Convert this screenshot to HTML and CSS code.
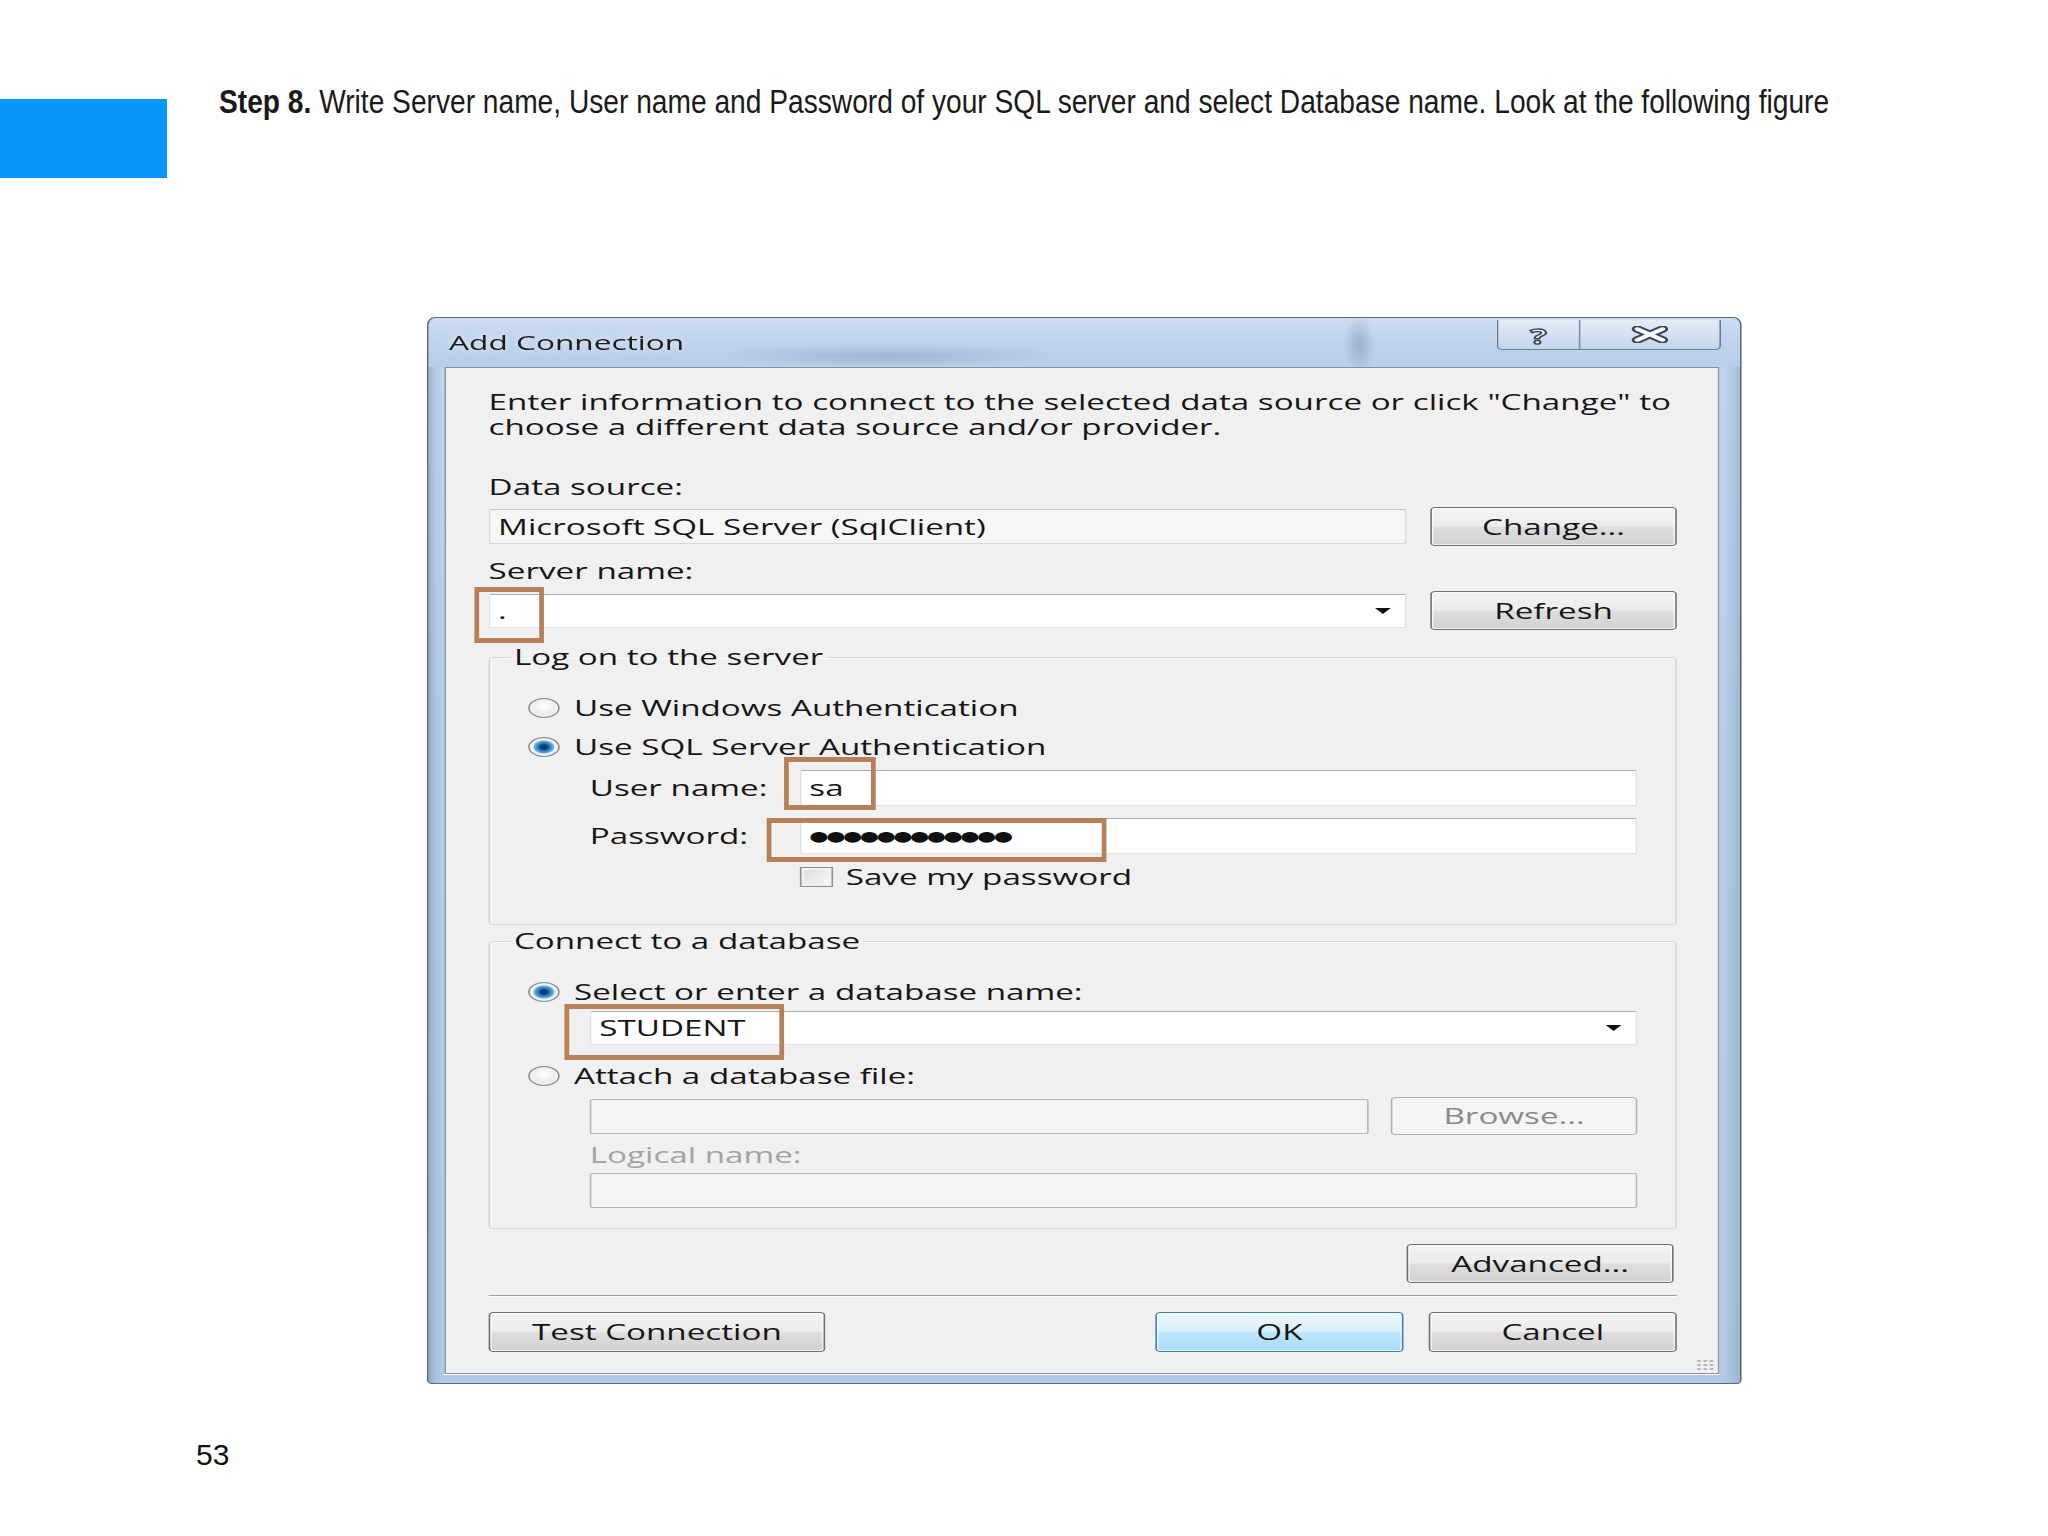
FILE: index.html
```html
<!DOCTYPE html>
<html lang="en">
<head>
  <meta charset="UTF-8" />
  <title>Step 8 — Add Connection</title>
  <link rel="stylesheet" href="styles.css">
</head>
<body>

<div class="slide">
  <div class="head">
    <div class="tab-mark"></div>
    <p class="step"><b>Step 8.</b> Write Server name, User name and Password of your SQL server and select Database name. Look at the following figure</p>
  </div>

  <!-- Screenshot: Add Connection dialog -->
  <div class="dialog">
    <div class="titlebar">
      <span class="title">Add Connection</span>
      <div class="caption-btns">
        <span class="cap help">?</span>
        <span class="cap close">
          <svg width="24" height="17" viewBox="0 0 24 17" preserveAspectRatio="none">
            <path d="M4 3 L20 14 M20 3 L4 14" stroke="#3b4756" stroke-width="7" stroke-linecap="round" fill="none"/>
            <path d="M4 3 L20 14 M20 3 L4 14" stroke="#f6f8fb" stroke-width="3.4" stroke-linecap="round" fill="none"/>
          </svg>
        </span>
      </div>
    </div>

    <div class="panel">
      <p class="intro">Enter information to connect to the selected data source or click "Change" to<br>choose a different data source and/or provider.</p>

      <div class="label">Data source:</div>
      <div class="row">
        <div class="field readonly">Microsoft SQL Server (SqlClient)</div>
        <button class="btn">Change...</button>
      </div>

      <div class="label">Server name:</div>
      <div class="row">
        <div class="field combo">.<span class="arrow"></span></div>
        <button class="btn">Refresh</button>
      </div>

      <fieldset class="group logon">
        <legend>Log on to the server</legend>
        <div class="opt"><span class="radio"></span>Use Windows Authentication</div>
        <div class="opt second"><span class="radio on"></span>Use SQL Server Authentication</div>
        <div class="cred user"><span class="cred-label">User name:</span><div class="field">sa</div></div>
        <div class="cred pass"><span class="cred-label">Password:</span><div class="field"><span class="dots">●●●●●●●●●●●●</span></div></div>
        <div class="check"><span class="box"></span>Save my password</div>
      </fieldset>

      <fieldset class="group database">
        <legend>Connect to a database</legend>
        <div class="opt"><span class="radio on"></span>Select or enter a database name:</div>
        <div class="field combo indent db-name">STUDENT<span class="arrow"></span></div>
        <div class="opt attach"><span class="radio"></span>Attach a database file:</div>
        <div class="row indent attach-row">
          <div class="field disabled"></div>
          <button class="btn disabled">Browse...</button>
        </div>
        <div class="label muted indent logical">Logical name:</div>
        <div class="field disabled indent logical-field"></div>
      </fieldset>

      <div class="advanced"><button class="btn">Advanced...</button></div>
      <div class="sep"></div>
      <div class="actions">
        <button class="btn test">Test Connection</button>
        <button class="btn default">OK</button>
        <button class="btn">Cancel</button>
      </div>
      <div class="grip"></div>
    </div>

    <!-- highlight frames drawn over the screenshot -->
    <div class="mark m-server"></div>
    <div class="mark m-user"></div>
    <div class="mark m-pass"></div>
    <div class="mark m-db"></div>
  </div>

  <div class="page-no">53</div>
</div>

</body>
</html>
```

FILE: styles.css
```css
* { box-sizing: border-box; margin: 0; padding: 0; }

body {
  background: #ffffff;
  font-family: 'Liberation Sans', Arial, sans-serif;
  color: #1a1a1a;
}

/* Slide header */
.head {
  display: flex;
  align-items: flex-start;
  height: 178px;
}

.tab-mark {
  width: 167px;
  height: 79px;
  margin-top: 99px;
  background: #0a97fa;
  flex-shrink: 0;
}

/* no narrow face installed: squeeze the regular one */
.step {
  margin: 81px 0 0 52px;
  font-family: 'Liberation Sans', Arial, sans-serif;
  font-size: 34px;
  line-height: 40px;
  color: #1a1a1a;
  white-space: nowrap;
  transform: scaleX(0.828);
  transform-origin: 0 0;
}

.step b { font-weight: 700; }

.page-no {
  margin: 53px 0 0 196px;
  font-size: 30px;
  line-height: 36px;
  color: #111;
}

/* The dialog is a stretched screenshot: built at its own size, widened */
.dialog {
  position: relative;
  width: 832px;
  margin: 139px 0 0 427px;
  padding-bottom: 9px;
  transform: scaleX(1.58);
  transform-origin: 0 0;
  font-family: 'Open Sans', 'Noto Sans', sans-serif;
  font-size: 21px;
  color: #161616;
  border: 1px solid #5d6978;
  border-radius: 5px 5px 3px 3px / 8px 8px 4px 4px;
  background:
    linear-gradient(90deg, rgba(70,95,130,0.3) 0, rgba(70,95,130,0.1) 4px, rgba(70,95,130,0) 9px),
    linear-gradient(270deg, rgba(90,115,150,0.25) 0, rgba(90,115,150,0) 10px),
    linear-gradient(#c3d6ee, #b7cde8 40%, #b3cae6);
}

.titlebar {
  height: 49px;
  display: flex;
  align-items: center;
  padding-left: 13px;
  background:
    radial-gradient(ellipse 110px 12px at 290px 38px, rgba(95,120,160,0.3), rgba(95,120,160,0)),
    radial-gradient(ellipse 10px 30px at 589px 26px, rgba(90,115,150,0.35), rgba(90,115,150,0)),
    linear-gradient(#cddcf0, #bcd1eb 60%, #b9cfe9);
  border-radius: 5px 5px 0 0 / 8px 8px 0 0;
}

.title {
  font-size: 20px;
  color: #1c1c1c;
  text-shadow: 0 0 6px rgba(255,255,255,0.8);
}

.caption-btns {
  display: flex;
  align-self: flex-start;
  margin: 2px 12px 0 auto;
  height: 30px;
  border: 1px solid #6e7b8c;
  border-top: none;
  border-radius: 0 0 4px 4px;
  background: linear-gradient(rgba(255,255,255,0.45), rgba(210,224,240,0.3));
}

.cap {
  display: flex;
  align-items: center;
  justify-content: center;
}

.cap.help {
  width: 52px;
  border-right: 1px solid #8290a2;
  font-weight: 700;
  font-size: 22px;
  line-height: 26px;
  color: #f8f9fb;
  -webkit-text-stroke: 1.4px #3b4756;
}

.cap.close { width: 88px; }

/* Client area */
.panel {
  position: relative;
  margin: 0 13px 0 10px;
  padding: 22px 26px 21px 27px;
  background: #f0f0f0;
  border: 1px solid #8593a5;
}

.intro { line-height: 25px; }

.label {
  margin-top: 35px;
  line-height: 25px;
}

.label + .row { margin-top: 7px; }
.row + .label { margin-top: 13px; }

.row {
  display: flex;
  align-items: center;
  gap: 15px;
  height: 39px;
}

.field {
  flex: 1;
  height: 35px;
  display: flex;
  align-items: center;
  padding: 0 5px;
  background: #ffffff;
  border: 1px solid #dfe3e9;
  border-top-color: #a9acb2;
  border-radius: 2px;
  white-space: nowrap;
}

.field.readonly {
  background: #f6f6f6;
  border-color: #d8d8d8;
  border-top-color: #c2c2c2;
}

.field.disabled {
  background: #f4f4f4;
  border-color: #b4b6b9;
}

.combo { height: 34px; }

.arrow {
  margin: 0 4px 0 auto;
  border-left: 5.5px solid transparent;
  border-right: 5.5px solid transparent;
  border-top: 6px solid #111;
}

.btn {
  width: 156px;
  height: 39px;
  flex-shrink: 0;
  font-family: 'Open Sans', 'Noto Sans', sans-serif;
  font-size: 21px;
  color: #161616;
  border: 1px solid #707070;
  border-radius: 3px;
  background: linear-gradient(#f3f3f3, #ececec 48%, #dedede 52%, #d1d1d1);
  box-shadow: inset 0 0 0 1px rgba(255,255,255,0.7);
  cursor: pointer;
}

.btn.disabled {
  color: #8a8a8a;
  border-color: #adb2b5;
  background: #f4f4f4;
  box-shadow: none;
}

.btn.default {
  border-color: #3c7fb1;
  background: linear-gradient(#eaf6fd, #d9f0fc 48%, #bee6fd 52%, #a9daf5);
}

/* Group boxes */
.group {
  margin-top: 15px;
  min-width: 0;
  padding: 23px 24px 35px 24px;
  border: 1px solid #d3d6d9;
  border-radius: 3px;
  box-shadow: inset 1px 1px 0 #fbfbfb;
}

.group legend {
  margin-left: -11px;
  padding: 0 2px;
  line-height: 25px;
}

.group.database {
  margin-top: 4px;
  padding-bottom: 20px;
}

.opt {
  display: flex;
  align-items: center;
  height: 30px;
}

.opt.second { margin-top: 9px; }
.opt.attach { margin-top: 16px; }

.radio {
  width: 20px;
  height: 20px;
  margin-right: 9px;
  border-radius: 50%;
  border: 1px solid #8b8c8d;
  background: radial-gradient(circle at 50% 40%, #ffffff, #dadada);
  box-shadow: inset 0 0 0 2px #f3f3f3;
}

.radio.on {
  background: radial-gradient(circle, #0f3d6b 0, #0f3d6b 2px, #2b81c6 4px, #64aee3 6px, #e9eef3 7px, #d6d6d6 10px);
}

.cred {
  display: flex;
  align-items: center;
  height: 36px;
  margin-top: 8px;
  padding-left: 39px;
}

.cred.pass { margin-top: 12px; }

.cred-label {
  width: 133px;
  flex-shrink: 0;
}

.cred .field { height: 36px; }

.dots {
  font-family: 'DejaVu Sans', sans-serif;
  font-size: 14px;
  letter-spacing: -1.6px;
  color: #111;
}

.check {
  display: flex;
  align-items: center;
  height: 24px;
  margin-top: 11px;
  padding-left: 172px;
}

.box {
  width: 21px;
  height: 20px;
  margin-right: 8px;
  border: 1px solid #8e8f8f;
  background: linear-gradient(135deg, #d9d9d9, #fbfbfb);
  box-shadow: inset 0 0 0 2px #efefef;
}

.indent { margin-left: 39px; }

.db-name { margin-top: 4px; }

.attach-row {
  margin-top: 6px;
  height: 38px;
  gap: 14px;
}

.attach-row .btn { height: 38px; }

.label.logical {
  margin-top: 8px;
}

.muted { color: #a3a3a3; }

.logical-field { margin-top: 5px; }

.advanced {
  display: flex;
  justify-content: flex-end;
  margin-top: 15px;
  padding-right: 2px;
}

.advanced .btn { width: 169px; }

.sep {
  margin-top: 12px;
  border-top: 1px solid #a0a0a0;
  border-bottom: 1px solid #ffffff;
}

.actions {
  display: flex;
  gap: 16px;
  margin-top: 15px;
}

.actions .btn { height: 40px; width: 157px; }
.actions .btn.test { width: 213px; }
.actions .btn.default { margin-left: auto; }

.grip {
  position: absolute;
  right: 2px;
  bottom: 2px;
  width: 12px;
  height: 12px;
  background: radial-gradient(circle, #b5b5b5 1px, transparent 1.5px) 0 0 / 4px 4px;
}

/* Orange annotation frames over the screenshot */
.mark {
  position: absolute;
  border: 5px solid #b5805a;
  border-left-width: 3.2px;
  border-right-width: 3.2px;
}

.m-server { left: 28.7px; top: 269px; width: 44px; height: 56px; }
.m-user   { left: 225px;  top: 439px; width: 57.5px; height: 53px; }
.m-pass   { left: 214px;  top: 500px; width: 215px; height: 44px; }
.m-db     { left: 86.3px; top: 686px; width: 139px; height: 56px; }
```
